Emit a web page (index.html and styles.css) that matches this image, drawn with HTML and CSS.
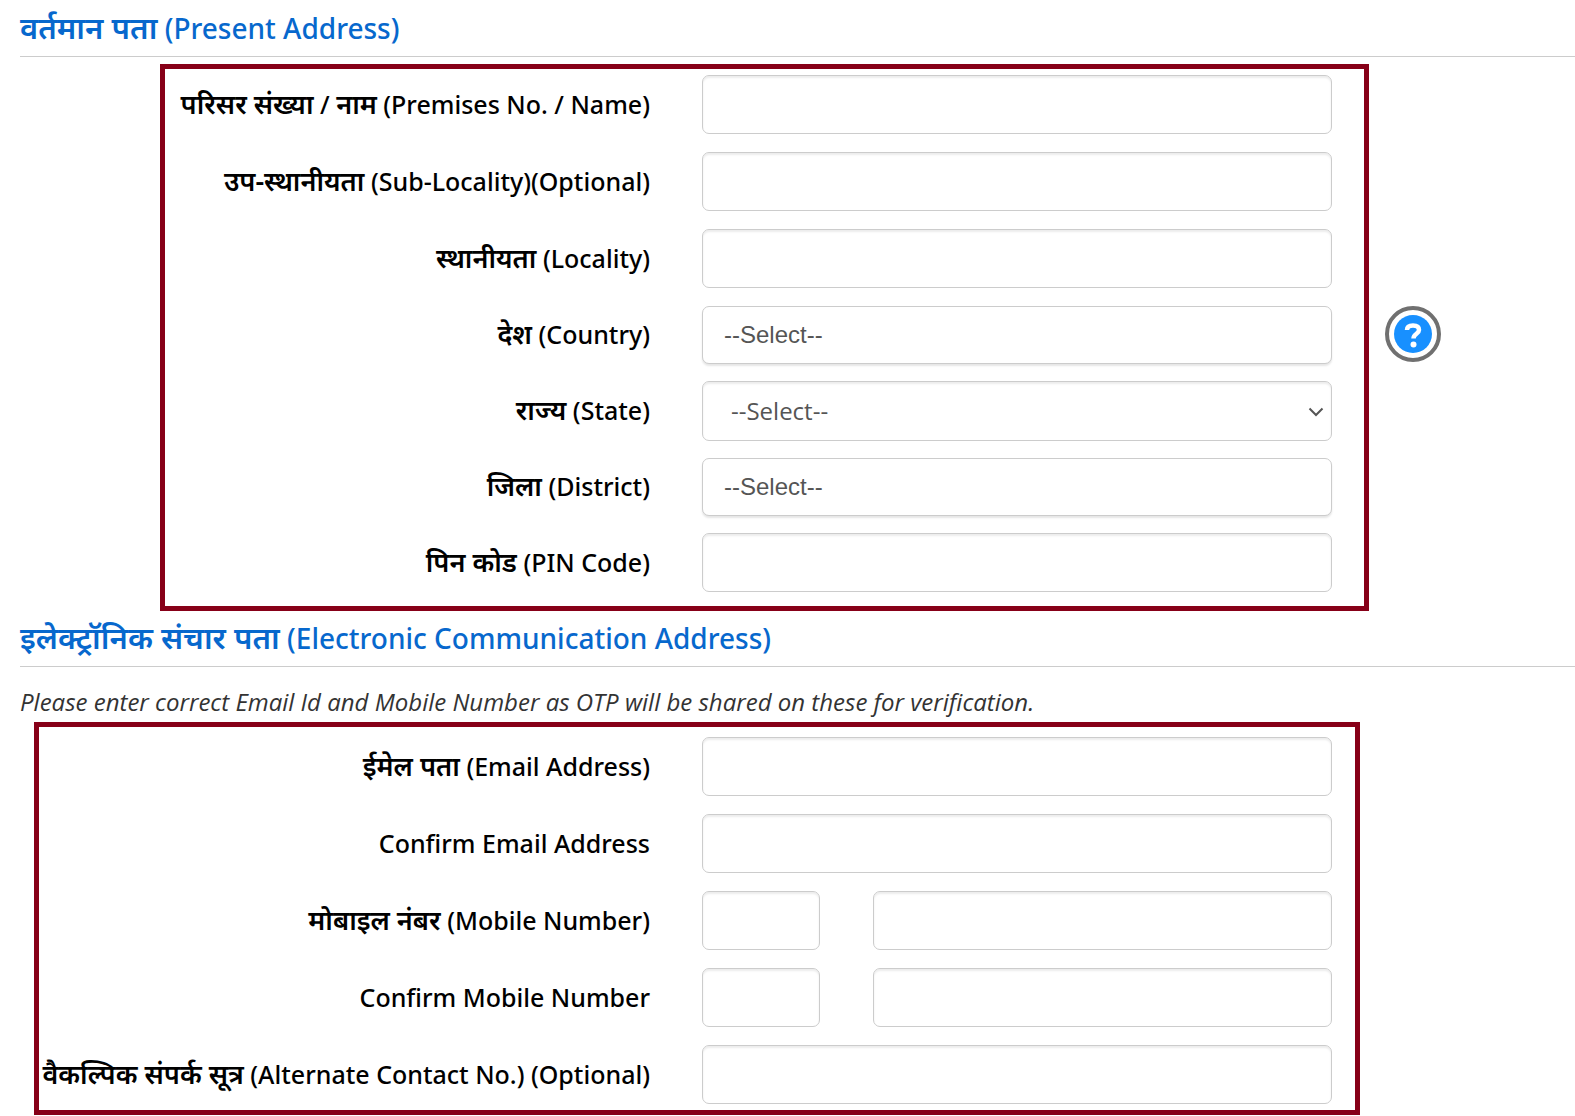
FILE: index.html
```html
<!DOCTYPE html>
<html lang="en">
<head>
	<meta charset="utf-8">
	<title>Address</title>
	<link rel="stylesheet" href="styles.css">
</head>
<body>
	<form action="#" method="post">

		<h2 class="section_title"><span class="hindi" lang="hi">वर्तमान पता</span> (Present Address)</h2>

		<div class="present">
			<div class="box box_present">
				<div class="row">
					<label for="premises"><span class="hindi" lang="hi">परिसर संख्या</span> / <span class="hindi" lang="hi">नाम</span> (Premises No. / Name)</label>
					<input type="text" id="premises" name="premises">
				</div>
				<div class="row">
					<label for="sublocality"><span class="hindi" lang="hi">उप-स्थानीयता</span> (Sub-Locality)(Optional)</label>
					<input type="text" id="sublocality" name="sublocality">
				</div>
				<div class="row">
					<label for="locality"><span class="hindi" lang="hi">स्थानीयता</span> (Locality)</label>
					<input type="text" id="locality" name="locality">
				</div>
				<div class="row">
					<label for="country"><span class="hindi" lang="hi">देश</span> (Country)</label>
					<select class="combo" id="country" name="country"><option>--Select--</option></select>
				</div>
				<div class="row">
					<label for="state"><span class="hindi" lang="hi">राज्य</span> (State)</label>
					<div class="state">
						<select id="state" name="state"><option>--Select--</option></select>
						<svg class="arrow" viewBox="0 0 16 10"><path d="M1.500 1.500 8 8l6.500-6.500" fill="none" stroke="#555" stroke-width="2"/></svg>
					</div>
				</div>
				<div class="row">
					<label for="district"><span class="hindi" lang="hi">जिला</span> (District)</label>
					<select class="combo" id="district" name="district"><option>--Select--</option></select>
				</div>
				<div class="row">
					<label for="pin"><span class="hindi" lang="hi">पिन कोड</span> (PIN Code)</label>
					<input type="text" id="pin" name="pin">
				</div>
			</div>

			<button type="button" class="help" aria-label="Help">
				<svg viewBox="0 0 56 56">
					<circle cx="28" cy="28" r="26" fill="#fff" stroke="#707070" stroke-width="4"/>
					<circle cx="28" cy="28" r="19" fill="#1890ff"/>
					<path d="M22 24c0-3 2.500-4.500 6-4.500s6 1.500 6 4.500c0 4-5.500 3.500-5.500 8.500" fill="none" stroke="#fff" stroke-width="4.500"/>
					<circle cx="28.500" cy="38.500" r="3" fill="#fff"/>
				</svg>
			</button>
		</div>

		<h2 class="section_title"><span class="hindi" lang="hi">इलेक्ट्रॉनिक संचार पता</span> (Electronic Communication Address)</h2>
		<p class="note">Please enter correct Email Id and Mobile Number as OTP will be shared on these for verification.</p>

		<div class="box box_contact">
			<div class="row">
				<label for="email"><span class="hindi" lang="hi">ईमेल पता</span> (Email Address)</label>
				<input type="email" id="email" name="email">
			</div>
			<div class="row">
				<label for="email2">Confirm Email Address</label>
				<input type="email" id="email2" name="email2">
			</div>
			<div class="row">
				<label for="mobile"><span class="hindi" lang="hi">मोबाइल नंबर</span> (Mobile Number)</label>
				<div class="phone">
					<input type="text" name="code" aria-label="Country code">
					<input type="tel" id="mobile" name="mobile">
				</div>
			</div>
			<div class="row">
				<label for="mobile2">Confirm Mobile Number</label>
				<div class="phone">
					<input type="text" name="code2" aria-label="Confirm country code">
					<input type="tel" id="mobile2" name="mobile2">
				</div>
			</div>
			<div class="row">
				<label for="alternate"><span class="hindi" lang="hi">वैकल्पिक संपर्क सूत्र</span> (Alternate Contact No.) (Optional)</label>
				<input type="tel" id="alternate" name="alternate">
			</div>
		</div>

	</form>
</body>
</html>
```

FILE: styles.css
```css
* {box-sizing: border-box;}
body {margin: 0; padding: 1px 0 0 20px; background: white; color: black; font-family: "Noto Sans", sans-serif;}

.section_title {margin: 0; height: 56px; padding-top: 6px; border-bottom: #ccc solid 1px;
		color: #0768cd; font-size: 28px; line-height: 42px; font-weight: 500;}
.hindi {font-weight: 600; font-size: 27px; line-height: 1;}
.section_title .hindi {font-size: 31px;}
.note {margin: 0; padding-top: 17px; height: 55px; color: #333; font-family: "Open Sans", sans-serif;
		font-size: 24px; line-height: 36px; font-style: italic;}

.present {display: flex; align-items: center; gap: 16px; margin: 7px 134px 0 140px;}
.box {border: #870018 solid 5px;}
.box_present {flex: 1; padding: 6px 32px 13px 0;}
.box_contact {margin: 0 215px 0 14px; padding: 10px 23px 5px 0;}

.row {display: grid; grid-template-columns: 485fr 630fr; column-gap: 52px; align-items: center; margin-bottom: 17px;}
.box_contact .row {grid-template-columns: 611fr 630fr;}
.row:last-child {margin-bottom: 0;}
label {padding-bottom: 2px; font-size: 25px; line-height: 36px; font-weight: 500; text-align: right; white-space: nowrap;}

input, select {display: block; width: 100%; min-width: 0; height: 59px; margin: 0 0 1px; padding: 0 22px; border: #ccc solid 1px;
		border-radius: 7px; background: white; color: #555; font: 24px "Open Sans", sans-serif;
		box-shadow: inset 0 2px 2px rgba(0,0,0,0.075);}
select {height: 60px; margin: 0; padding: 0 28px 2px; appearance: none;}
.combo {height: 58px; padding: 0 21px 2px; font-family: "Liberation Sans", sans-serif; box-shadow: 0 2px 2px rgba(0,0,0,0.1);}

.state {position: relative;}
.arrow {position: absolute; right: 8px; top: 26px; width: 16px; height: 10px; pointer-events: none;}

.phone {display: grid; grid-template-columns: 118fr 459fr; column-gap: 53px;}

.help {flex: none; width: 56px; height: 56px; margin: 0 0 7px; padding: 0; border: 0; background: none;}
.help svg {display: block;}
```
